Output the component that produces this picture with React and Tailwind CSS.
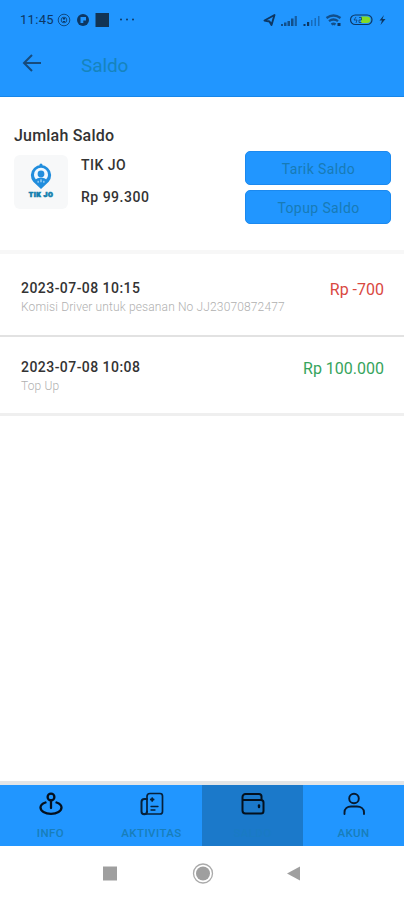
const tabs = [
  { label: "INFO", icon: InfoIcon },
  { label: "AKTIVITAS", icon: ActivityIcon },
  { label: "SALDO", icon: WalletIcon, active: true },
  { label: "AKUN", icon: AccountIcon },
];

const transactions = [
  {
    date: "2023-07-08 10:15",
    note: "Komisi Driver untuk pesanan No JJ23070872477",
    amount: "Rp -700",
    color: "text-[#d9483f]",
    row: "h-[83px] border-b-2 border-[#e2e2e2] pt-[24px]",
  },
  {
    date: "2023-07-08 10:08",
    note: "Top Up",
    amount: "Rp 100.000",
    color: "text-[#36a45c]",
    row: "h-[79px] border-b-3 border-[#efefef] pt-[20px]",
  },
];

function InfoIcon() {
  return (
    <svg width="24" height="24" viewBox="0 0 24 24" fill="none" stroke="#04101d" strokeWidth="2.300" strokeLinecap="round">
      <circle cx="12" cy="5" r="3.400" />
      <path d="M12 8.500v7.500M6.500 10.500C3.500 11.500 1.500 13.200 1.500 15.500c0 3.600 4.500 6.300 10.500 6.300s10.500-2.700 10.500-6.300c0-2.300-2-4-5-5" />
    </svg>
  );
}

function ActivityIcon() {
  return (
    <svg width="24" height="24" viewBox="0 0 24 24" fill="none" stroke="#06203a" strokeWidth="1.700" strokeLinecap="round" strokeLinejoin="round">
      <path d="M7 19.500V4.500A3 3 0 0 1 10 1.500h10a2.500 2.500 0 0 1 2.500 2.500v15.500A2.500 2.500 0 0 1 20 22H4" />
      <path d="M7 7H4.500A3 3 0 0 0 1.500 10v9.500a2.700 2.700 0 0 0 5.500 0" strokeWidth="2" />
      <path d="M10.800 7.500h2.800M12.200 6.100v2.800" strokeWidth="1.800" />
      <path d="M11 14.500h7M11 18h4" strokeWidth="1.300" />
    </svg>
  );
}

function WalletIcon() {
  return (
    <svg width="24" height="24" viewBox="0 0 24 24" fill="none" stroke="#03101d" strokeWidth="2" strokeLinecap="round" strokeLinejoin="round">
      <path d="M20.500 8V4.500A2.500 2.500 0 0 0 18 2H4.500A3 3 0 0 0 1.500 5v13.500a3 3 0 0 0 3 3H20a2.500 2.500 0 0 0 2.500-2.500v-8.500A2.500 2.500 0 0 0 20 8H2" />
      <path d="M18 13.500v1.500" strokeWidth="2.400" />
    </svg>
  );
}

function AccountIcon() {
  return (
    <svg width="24" height="24" viewBox="0 0 24 24" fill="none" stroke="#071a30" strokeWidth="1.900" strokeLinecap="round">
      <circle cx="12" cy="6.500" r="4.800" />
      <path d="M2.500 22v-1.500c0-4 3-6 6.500-6h6c3.500 0 7 2 7 6V22" />
    </svg>
  );
}

function StatusBar() {
  return (
    <div className="flex h-10 items-center pl-[20px] text-[#0d3763]">
      <span className="w-[34px] whitespace-nowrap text-[13px] leading-4 tracking-[0.3px]">11:45</span>
      <svg width="80" height="16" viewBox="0 0 80 16" className="ml-[2px] shrink-0" fill="currentColor">
        <circle cx="8" cy="8" r="5.800" fill="none" stroke="currentColor" strokeWidth="1" opacity=".8" />
        <circle cx="8" cy="8" r="2.800" fill="none" stroke="currentColor" strokeWidth=".8" />
        <path d="M7 6h2v1.500H7zM7 9h2v1H7z" />
        <circle cx="27" cy="8" r="6" />
        <path d="M24.500 5h5.500v3.500h-2.700V11h-2.800z" fill="#2196ff" />
        <path d="M39.500 1h13.500v14H39.500z" fill="#123454" />
        <circle cx="65" cy="7.500" r="1" />
        <circle cx="71" cy="7.500" r="1" />
        <circle cx="77" cy="7.500" r="1" />
      </svg>
      <svg width="128" height="16" viewBox="0 0 128 16" className="ml-auto mr-[14px] shrink-0" fill="currentColor">
        <path d="M2.500 8.500 12.500 3 9.500 13 7.500 9.500z" fill="none" stroke="currentColor" strokeWidth="1.900" strokeLinejoin="round" />
        <path d="M19 12h2v2h-2zM22 10.500h2.500V14H22zM25.500 9H28v5h-2.500zM29 6.500h2.500V14H29z" opacity=".75" />
        <path d="M32.700 4h2.200v10h-2.200z" opacity=".6" />
        <path d="M41.500 12h2v2h-2zM45 10h2.200v4H45z" />
        <path d="M49 8h1.500v6H49zM52.500 6H54v8h-1.500zM56 4h1.500v10H56z" opacity=".45" />
        <g fill="none" stroke="currentColor" strokeWidth="2.300" opacity=".75">
          <path d="M64.500 6q7-5 14 0M67 9.200q4.500-3.500 9 0M69.500 12.500q2-1.500 4 0" />
        </g>
        <path d="M75.500 11h3v3h-3z" />
        <rect x="88.500" y="3" width="21.500" height="9.500" rx="4.750" fill="none" stroke="currentColor" strokeWidth="1.200" />
        <path d="M99 4.500h6a3.300 3.300 0 0 1 0 6.600h-6z" fill="#83dc27" />
        <path d="m94 5-2 3h3l-1 3M97 5.500h2.500V8H97v2.500h2.500" fill="none" stroke="currentColor" strokeWidth=".7" />
        <path d="m122 3-4.500 5.500h2.500L118.500 13l5-6h-3z" />
      </svg>
    </div>
  );
}

function BrandLogo() {
  return (
    <div className="flex h-[54px] w-[54px] shrink-0 flex-col items-center rounded-md bg-[#f7f8f9] pt-[8px]">
      <svg width="24" height="26" viewBox="0 0 24 27" className="shrink-0">
        <path d="M4 19.500A10.500 10.500 0 1 1 20 19.500L12 27z" fill="#208ddd" />
        <circle cx="12" cy="12.300" r="7.300" fill="#eff8ff" />
        <circle cx="12" cy="11.300" r="3.500" fill="#208ddd" />
        <path d="M5 18q7-6 14 0l-7 7z" fill="#208ddd" />
        <path d="M9 18.500v2M15 18.500v2M12 17v3" stroke="#d7efff" />
        <circle cx="12" cy="2" r="1.600" fill="#208ddd" />
      </svg>
      <span className="mt-[2px] whitespace-nowrap text-[7px] leading-[8px] font-black tracking-[0.5px] text-[#147fae] [-webkit-text-stroke:0.7px_#147fae]">
        TIK JO
      </span>
    </div>
  );
}

function ActionButton({ children }) {
  return (
    <button className="flex h-[34px] w-[146px] items-center justify-center rounded-[5px] border border-[#1b89ef] bg-[#2196ff] pt-[2px] pl-[1px] text-[14px] leading-5 tracking-[0.4px] text-[#187bb6]">
      {children}
    </button>
  );
}

export default function App() {
  return (
    <div className="flex h-[900px] w-[404px] flex-col overflow-hidden bg-white font-['Roboto',sans-serif]">
      <header className="h-[97px] shrink-0 border-b border-[#1786e9] bg-[#2196ff]">
        <StatusBar />
        <div className="flex h-[48px] items-center pl-[22px]">
          <svg width="20" height="20" viewBox="0 0 20 20" fill="none" stroke="#174b7c" strokeWidth="2">
            <path d="M19 9H3M10 1 2 9l8 8" />
          </svg>
          <h1 className="mt-[4px] ml-[39px] text-[19px] leading-6 tracking-[-0.1px] text-[#1684bd]">Saldo</h1>
        </div>
      </header>

      <section className="h-[157px] shrink-0 border-b-4 border-[#f7f7f7] pt-[29px] pr-[13px] pl-[14px] text-[#333]">
        <h2 className="text-[16px] leading-5 font-medium tracking-[0.2px]">Jumlah Saldo</h2>
        <div className="mt-[5px] flex">
          <div className="pt-[4px]">
            <BrandLogo />
          </div>
          <div className="ml-[13px] flex flex-col gap-[12px] pt-[4px] text-[14px] leading-5 font-medium">
            <span className="tracking-[0.5px]">TIK JO</span>
            <span className="tracking-[0.5px]">Rp 99.300</span>
          </div>
          <div className="ml-auto flex flex-col gap-[5px]">
            <ActionButton>Tarik Saldo</ActionButton>
            <ActionButton>Topup Saldo</ActionButton>
          </div>
        </div>
      </section>

      <main className="flex-1">
        {transactions.map((item) => (
          <div key={item.date} className={`flex justify-between pr-[20px] pl-[21px] whitespace-nowrap ${item.row}`}>
            <div className="flex flex-col">
              <span className="text-[14px] leading-5 font-medium tracking-[0.45px] text-[#333]">{item.date}</span>
              <span className="-mt-px text-[12px] leading-5 font-light tracking-[0.14px] text-[#b0b0b0]">{item.note}</span>
            </div>
            <span className={`mt-[2px] text-[16px] leading-5 ${item.color}`}>{item.amount}</span>
          </div>
        ))}
      </main>

      <nav className="grid h-[65px] shrink-0 grid-cols-4 border-t-4 border-[#e3e5e7]">
        {tabs.map(({ label, icon: Icon, active }) => (
          <button
            key={label}
            className={`flex flex-col items-center pt-[7px] text-[11.5px] leading-[14px] font-medium ${active ? "bg-[#1b79ca] text-[#1a7bc4]" : "bg-[#2196ff] text-[#187eba]"}`}
          >
            <Icon />
            <span className="mt-[10px] tracking-[0.4px]">{label}</span>
          </button>
        ))}
      </nav>

      <footer className="flex h-[54px] shrink-0 items-center justify-center">
        <svg width="202" height="28" viewBox="0 0 202 28" fill="#9f9f9f">
          <path d="M2 7.500h14v14H2z" />
          <circle cx="102" cy="14.500" r="9.500" fill="none" stroke="#aaa" strokeWidth="1.300" />
          <circle cx="102" cy="14.500" r="7" />
          <path d="M199 7.500v14l-13-7z" />
        </svg>
      </footer>
    </div>
  );
}
